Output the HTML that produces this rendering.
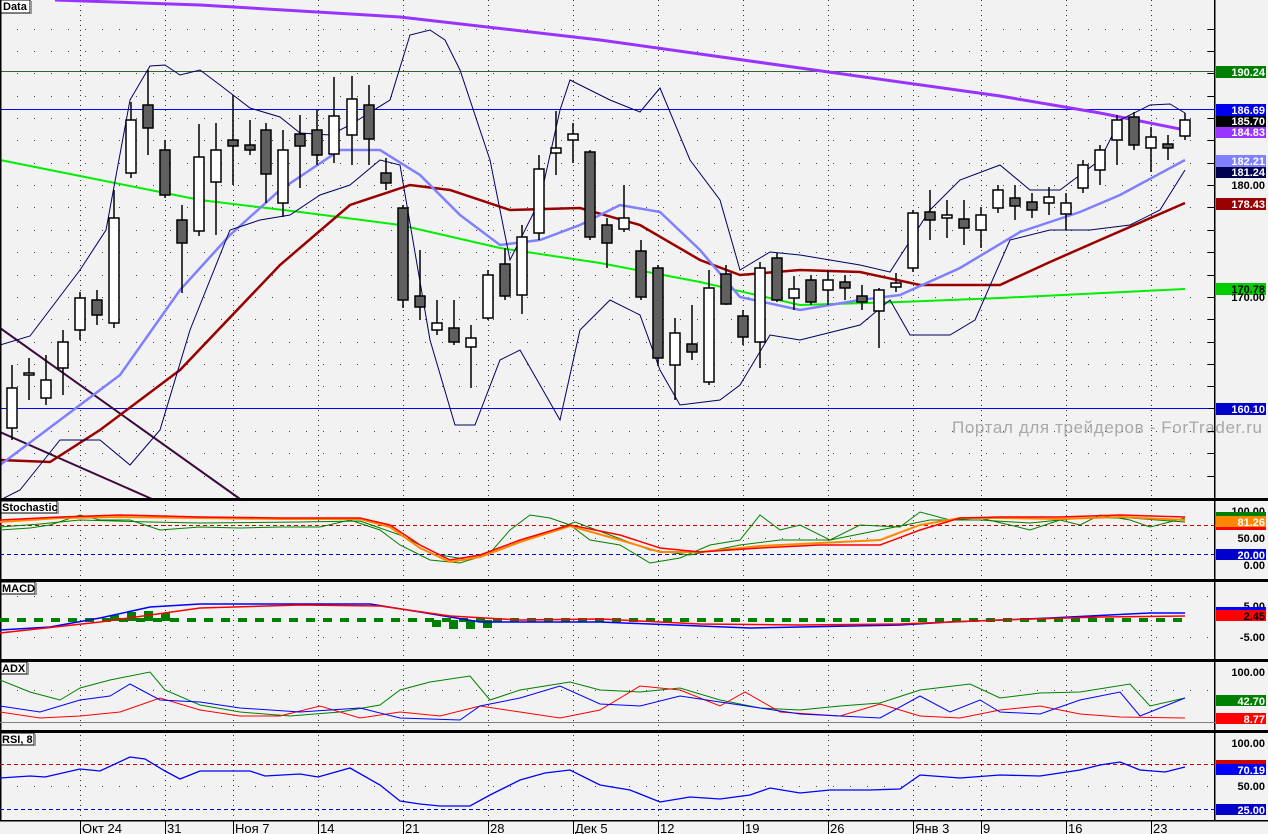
<!DOCTYPE html>
<html><head><meta charset="utf-8"><style>
html,body{margin:0;padding:0;background:#f2f2f2;}
svg{display:block;font-family:"Liberation Sans",sans-serif;}
.lb{font-weight:bold;font-size:11px;}
</style></head><body>
<svg width="1268" height="834" viewBox="0 0 1268 834" xmlns="http://www.w3.org/2000/svg">
<rect width="1268" height="834" fill="#f2f2f2"/>
<g stroke="#000" stroke-width="1" stroke-dasharray="1 4" opacity="0.8">
<path d="M80.5 0V820M165.5 0V820M233.5 0V820M318.5 0V820M403.5 0V820M488.5 0V820M573.5 0V820M658.5 0V820M743.5 0V820M828.5 0V820M913.5 0V820M981.5 0V820M1066.5 0V820M1151.5 0V820"/>
</g>
<g stroke="#000" stroke-width="1" stroke-dasharray="1 16" opacity="0.7">
<path d="M0 29.5H1215M0 51.5H1215M0 73.5H1215M0 96.5H1215M0 118.5H1215M0 140.5H1215M0 163.5H1215M0 185.5H1215M0 207.5H1215M0 230.5H1215M0 252.5H1215M0 275.5H1215M0 297.5H1215M0 319.5H1215M0 342.5H1215M0 364.5H1215M0 386.5H1215M0 431.5H1215M0 453.5H1215M0 476.5H1215"/>
<path d="M0 538.5H1215M0 596.5H1215M0 637.5H1215M0 690.5H1215M0 786.5H1215"/>
</g>
<path d="M0 71.5H1215" stroke="#336633" stroke-width="1"/>
<path d="M0 109.5H1215" stroke="#0000ff" stroke-width="1"/>
<path d="M0 408.5H1215" stroke="#0000ff" stroke-width="1"/>
<path d="M0 328L240 499M0 432L152 499" stroke="#3c0a3c" stroke-width="2" fill="none"/>
<polyline fill="none" stroke="#9933ff" stroke-width="3" points="55,0 200,5 400,17 600,40 800,68 1000,96 1100,113 1185,130"/>
<polyline fill="none" stroke="#00ee00" stroke-width="2" points="0,160 100,180 200,200 300,212 400,225 500,248 600,263 700,282 800,305 900,302 1000,298 1185,289"/>
<polyline fill="none" stroke="#990000" stroke-width="2.5" points="0,460 50,462 100,430 180,370 280,265 350,205 410,185 450,190 510,210 580,208 640,225 700,260 740,275 800,270 860,272 920,285 1000,285 1050,262 1100,240 1185,203"/>
<polyline fill="none" stroke="#8080ff" stroke-width="2.5" points="0,465 60,420 120,375 180,290 230,235 280,190 340,150 380,150 420,175 460,215 500,245 540,240 580,225 620,205 660,212 700,250 740,297 800,310 860,300 900,295 960,268 1020,232 1080,212 1120,195 1185,160"/>
<polyline fill="none" stroke="#000060" stroke-width="1" points="0,345 30,336 80,270 106,230 130,100 150,66 165,65 180,75 200,70 220,85 250,108 280,117 300,133 330,135 350,125 390,100 410,35 430,30 445,40 460,70 490,160 510,260 540,200 560,110 570,80 610,100 640,112 660,88 690,160 720,200 740,270 770,252 800,255 860,265 890,272 930,210 960,180 1000,165 1030,190 1060,190 1100,160 1120,120 1150,105 1170,104 1185,113"/>
<polyline fill="none" stroke="#000060" stroke-width="1" points="0,500 20,490 40,465 60,440 100,440 130,465 160,430 190,330 230,230 260,220 290,215 320,195 350,185 380,160 400,165 430,340 455,425 475,425 500,360 520,350 560,420 580,330 610,300 640,315 660,370 680,405 720,400 740,385 770,335 800,340 860,325 890,300 910,335 950,335 975,320 1010,240 1050,230 1090,230 1130,225 1160,210 1185,170"/>
<g stroke="#000" stroke-width="1.5">
<path d="M12 365V440M29 358V400M46 355V405M63 330V395M80 292V340M97 290V325M114 190V328M131 102V178M148 70V155M165 140V198M182 205V293M199 124V236M216 123V235M233 95V185M250 120V155M266 123V203M283 130V217M300 115V188M317 110V165M334 77V163M352 76V165M369 85V165M386 158V190M403 205V308M420 250V320M437 300V335M454 300V345M471 325V388M488 270V320M505 248V300M522 225V314M539 155V240M556 111V175M573 123V163M590 150V240M607 218V268M624 185V232M641 240V300M658 265V366M675 318V400M692 305V360M709 270V385M726 265V305M743 310V345M760 262V368M777 253V302M794 276V310M811 275V305M828 270V305M845 275V300M862 285V310M879 288V348M896 273V292M913 210V272M930 190V240M947 200V238M964 200V245M981 207V248M998 185V213M1015 185V220M1032 193V218M1049 187V215M1066 193V230M1083 160V193M1100 145V185M1117 115V165M1134 112V150M1151 127V172M1168 135V160M1185 113V140"/>
<g fill="#fff">
<rect x="7" y="388" width="10" height="40"/><rect x="24" y="373" width="10" height="2"/><rect x="41" y="380" width="10" height="18"/><rect x="58" y="342" width="10" height="26"/><rect x="75" y="298" width="10" height="32"/><rect x="109" y="218" width="10" height="105"/><rect x="126" y="120" width="10" height="53"/><rect x="194" y="157" width="10" height="74"/><rect x="211" y="150" width="10" height="32"/><rect x="278" y="150" width="10" height="53"/><rect x="329" y="116" width="10" height="38"/><rect x="347" y="99" width="10" height="36"/><rect x="432" y="323" width="10" height="7"/><rect x="466" y="338" width="10" height="9"/><rect x="483" y="275" width="10" height="43"/><rect x="517" y="237" width="10" height="58"/><rect x="534" y="169" width="10" height="64"/><rect x="551" y="148" width="10" height="5"/><rect x="568" y="134" width="10" height="6"/><rect x="619" y="218" width="10" height="11"/><rect x="670" y="333" width="10" height="32"/><rect x="704" y="288" width="10" height="94"/><rect x="755" y="268" width="10" height="74"/><rect x="789" y="289" width="10" height="9"/><rect x="823" y="280" width="10" height="10"/><rect x="874" y="290" width="10" height="21"/><rect x="891" y="283" width="10" height="4"/><rect x="908" y="213" width="10" height="55"/><rect x="942" y="215" width="10" height="3"/><rect x="976" y="215" width="10" height="15"/><rect x="993" y="190" width="10" height="18"/><rect x="1044" y="197" width="10" height="6"/><rect x="1061" y="203" width="10" height="11"/><rect x="1078" y="165" width="10" height="23"/><rect x="1095" y="150" width="10" height="20"/><rect x="1112" y="120" width="10" height="20"/><rect x="1146" y="137" width="10" height="11"/><rect x="1180" y="120" width="10" height="16"/>
</g>
<g fill="#606060">
<rect x="92" y="300" width="10" height="15"/><rect x="143" y="105" width="10" height="23"/><rect x="160" y="150" width="10" height="45"/><rect x="177" y="220" width="10" height="23"/><rect x="228" y="140" width="10" height="6"/><rect x="245" y="145" width="10" height="5"/><rect x="261" y="130" width="10" height="44"/><rect x="295" y="134" width="10" height="12"/><rect x="312" y="130" width="10" height="25"/><rect x="364" y="105" width="10" height="34"/><rect x="381" y="173" width="10" height="10"/><rect x="398" y="208" width="10" height="92"/><rect x="415" y="296" width="10" height="11"/><rect x="449" y="328" width="10" height="14"/><rect x="500" y="264" width="10" height="32"/><rect x="585" y="152" width="10" height="85"/><rect x="602" y="225" width="10" height="18"/><rect x="636" y="251" width="10" height="46"/><rect x="653" y="268" width="10" height="90"/><rect x="687" y="344" width="10" height="8"/><rect x="721" y="274" width="10" height="30"/><rect x="738" y="316" width="10" height="21"/><rect x="772" y="258" width="10" height="42"/><rect x="806" y="280" width="10" height="22"/><rect x="840" y="282" width="10" height="6"/><rect x="857" y="296" width="10" height="6"/><rect x="925" y="212" width="10" height="8"/><rect x="959" y="219" width="10" height="9"/><rect x="1010" y="198" width="10" height="8"/><rect x="1027" y="202" width="10" height="8"/><rect x="1129" y="117" width="10" height="28"/><rect x="1163" y="144" width="10" height="4"/>
</g>
</g>
<text x="952" y="433" font-size="17" fill="#a8a8a8" textLength="310" lengthAdjust="spacing">Портал для трейдеров - ForTrader.ru</text>
<g fill="#000">
<rect x="0" y="498" width="1268" height="3"/><rect x="0" y="579" width="1268" height="3"/><rect x="0" y="659" width="1268" height="3"/><rect x="0" y="730" width="1268" height="3"/>
<rect x="0" y="820" width="1268" height="1.5"/>
<rect x="1214" y="0" width="1.5" height="821"/>
<rect x="0" y="0" width="1.5" height="821"/>
</g>
<path d="M0 525.5H1215" stroke="#cc0000" stroke-dasharray="4 3"/>
<path d="M0 554.5H1215" stroke="#0000cc" stroke-dasharray="4 3"/>
<polyline fill="none" stroke="#008000" points="0,530 30,528 50,525 80,515 100,520 130,520 160,530 200,527 240,528 280,527 320,527 350,520 380,530 400,545 430,560 460,563 490,553 510,530 530,515 550,518 570,525 590,540 620,545 650,563 680,558 710,545 740,540 760,515 780,530 800,525 830,540 860,525 900,527 920,512 950,520 980,518 1010,525 1030,530 1060,520 1080,525 1100,515 1130,520 1150,527 1185,518"/>
<polyline fill="none" stroke="#008000" points="0,527 40,524 80,520 150,522 200,523 300,522 360,521 400,535 440,555 470,560 500,550 540,535 575,522 610,535 650,550 690,555 740,545 780,540 830,540 880,530 930,520 980,520 1030,523 1080,518 1130,518 1185,522"/>
<polyline fill="none" stroke="#ff8800" stroke-width="2" points="0,522 60,518 120,517 200,518 280,519 360,519 390,527 420,548 450,562 480,557 520,542 570,526 620,540 660,552 700,552 760,546 820,543 880,540 920,525 960,518 1000,518 1060,519 1120,517 1185,520"/>
<polyline fill="none" stroke="#ff0000" stroke-width="1.5" points="0,520 60,517 120,515 200,517 280,518 360,518 390,525 420,545 450,560 480,555 520,540 570,525 620,535 660,548 700,552 760,548 820,545 880,545 920,530 960,518 1000,517 1060,517 1120,515 1185,517"/>
<path d="M0 620H1185" stroke="#008000" stroke-width="4" stroke-dasharray="9 8"/>
<g fill="#008000"><rect x="110" y="615" width="9" height="6"/><rect x="127" y="612" width="9" height="9"/><rect x="144" y="611" width="9" height="10"/><rect x="161" y="613" width="9" height="8"/><rect x="432" y="620" width="9" height="7"/><rect x="449" y="620" width="9" height="9"/><rect x="466" y="620" width="9" height="9"/><rect x="483" y="620" width="9" height="8"/></g>
<polyline fill="none" stroke="#0000ff" stroke-width="1.5" points="0,630 50,627 100,618 150,607 200,604 300,604 370,604 420,612 480,622 540,622 600,622 650,624 700,626 750,628 800,627 900,625 950,622 1050,618 1150,613 1185,613"/>
<polyline fill="none" stroke="#ff0000" stroke-width="1.5" points="0,633 100,622 200,608 300,605 380,606 450,616 520,620 600,619 700,624 800,625 900,624 1000,620 1100,617 1185,616"/>
<path d="M0 722.5H1215" stroke="#808080"/>
<polyline fill="none" stroke="#008000" points="0,680 30,692 60,700 80,688 110,680 150,672 165,690 200,705 240,712 290,716 340,712 380,705 400,690 430,682 470,676 490,700 520,690 570,682 600,690 640,692 680,688 720,700 760,708 800,710 840,706 880,703 920,690 970,684 1000,698 1040,693 1080,692 1130,684 1150,706 1185,698"/>
<polyline fill="none" stroke="#ff0000" points="0,712 40,718 80,716 120,712 160,698 200,710 240,716 280,716 320,706 360,718 400,712 440,716 480,706 520,712 560,718 600,710 640,686 680,690 720,706 745,692 780,712 840,716 880,704 920,716 960,718 1000,710 1040,706 1080,714 1120,717 1185,718"/>
<polyline fill="none" stroke="#0000ff" points="0,706 40,712 80,700 110,696 130,684 160,700 200,702 240,708 300,712 360,708 400,718 460,720 480,706 520,698 560,686 600,704 640,706 680,696 720,702 760,708 800,714 840,716 880,718 920,696 950,712 980,700 1000,712 1040,714 1080,700 1120,692 1140,716 1160,708 1185,698"/>
<path d="M0 764.5H1215" stroke="#cc0000" stroke-dasharray="4 3"/>
<path d="M0 809.5H1215" stroke="#0000cc" stroke-dasharray="4 3"/>
<polyline fill="none" stroke="#0000ff" stroke-width="1.3" points="0,778 30,776 45,777 80,769 100,771 130,757 145,759 165,771 180,779 200,771 250,771 265,776 300,774 318,777 350,768 380,785 400,801 420,804 440,806 470,806 490,795 520,780 545,773 570,770 600,785 630,790 660,802 690,797 720,799 750,795 770,788 800,793 830,790 870,790 900,789 920,775 960,778 1000,775 1040,776 1060,773 1080,770 1100,765 1120,762 1140,770 1165,772 1185,767"/>
<g>
<rect x="1" y="0" width="29" height="13" fill="#fff" stroke="#000" stroke-width="1"/><rect x="30" y="1" width="2" height="13" fill="#999"/>
<text x="3" y="10" class="lb" fill="#000">Data</text>
<rect x="1" y="501" width="56" height="12" fill="#fff" stroke="#000"/><rect x="57" y="502" width="2" height="12" fill="#999"/>
<text x="2" y="511" class="lb">Stochastic</text>
<rect x="1" y="582" width="34" height="12" fill="#fff" stroke="#000"/><rect x="35" y="583" width="2" height="12" fill="#999"/>
<text x="2" y="592" class="lb">MACD</text>
<rect x="1" y="662" width="26" height="12" fill="#fff" stroke="#000"/><rect x="27" y="663" width="2" height="12" fill="#999"/>
<text x="2" y="672" class="lb">ADX</text>
<rect x="1" y="733" width="33" height="12" fill="#fff" stroke="#000"/><rect x="34" y="734" width="2" height="12" fill="#999"/>
<text x="2" y="743" class="lb">RSI, 8</text>
</g>
<g stroke="#000"><path d="M1208 29.5H1214M1208 51.5H1214M1208 73.5H1214M1208 96.5H1214M1208 118.5H1214M1208 140.5H1214M1208 163.5H1214M1208 185.5H1214M1208 207.5H1214M1208 230.5H1214M1208 252.5H1214M1208 275.5H1214M1208 297.5H1214M1208 319.5H1214M1208 342.5H1214M1208 364.5H1214M1208 386.5H1214M1208 408.5H1214M1208 431.5H1214M1208 453.5H1214M1208 476.5H1214"/></g>
<g class="lb" text-anchor="end">
<rect x="1216" y="66" width="50" height="12" fill="#008000"/><text x="1265" y="76" fill="#fff">190.24</text>
<rect x="1216" y="104" width="50" height="12" fill="#0000ee"/><text x="1265" y="114" fill="#fff">186.69</text>
<rect x="1216" y="116" width="50" height="11" fill="#000"/><text x="1265" y="125" fill="#fff">185.70</text>
<rect x="1216" y="127" width="50" height="11" fill="#9933ff"/><text x="1265" y="136" fill="#fff">184.83</text>
<rect x="1216" y="155" width="50" height="12" fill="#8080ff"/><text x="1265" y="165" fill="#fff">182.21</text>
<rect x="1216" y="167" width="50" height="11" fill="#000050"/><text x="1265" y="176" fill="#fff">181.24</text>
<text x="1265" y="189" fill="#000">180.00</text>
<rect x="1216" y="198" width="50" height="12" fill="#990000"/><text x="1265" y="208" fill="#fff">178.43</text>
<rect x="1216" y="283" width="50" height="12" fill="#00cc00"/><text x="1265" y="293" fill="#000">170.78</text>
<text x="1265" y="301" fill="#000">170.00</text>
<rect x="1216" y="403" width="50" height="12" fill="#0000cc"/><text x="1265" y="413" fill="#fff">160.10</text>
<text x="1265" y="515" fill="#000">100.00</text>
<rect x="1216" y="512" width="50" height="4" fill="#008000"/>
<rect x="1216" y="516" width="50" height="11" fill="#ff8800"/><text x="1265" y="526" fill="#fff">81.26</text>
<rect x="1216" y="527" width="50" height="3" fill="#ff0000"/>
<text x="1265" y="542" fill="#000">50.00</text>
<rect x="1216" y="549" width="50" height="11" fill="#0000cc"/><text x="1265" y="559" fill="#fff">20.00</text>
<text x="1265" y="569" fill="#000">0.00</text>
<text x="1265" y="610" fill="#000">5.00</text>
<rect x="1216" y="607" width="50" height="3" fill="#0000ff"/>
<rect x="1216" y="610" width="50" height="11" fill="#ff0000"/><text x="1265" y="620" fill="#000">2.45</text>
<text x="1265" y="641" fill="#000">-5.00</text>
<text x="1265" y="676" fill="#000">100.00</text>
<rect x="1216" y="695" width="50" height="11" fill="#008000"/><text x="1265" y="705" fill="#fff">42.70</text>
<rect x="1216" y="713" width="50" height="11" fill="#ff0000"/><text x="1265" y="723" fill="#fff">8.77</text>
<text x="1265" y="747" fill="#000">100.00</text>
<rect x="1216" y="760" width="50" height="4" fill="#cc0000"/>
<rect x="1216" y="764" width="50" height="11" fill="#0000ff"/><text x="1265" y="774" fill="#fff">70.19</text>
<text x="1265" y="790" fill="#000">50.00</text>
<rect x="1216" y="804" width="50" height="11" fill="#0000cc"/><text x="1265" y="814" fill="#fff">25.00</text>
</g>
<g stroke="#000"><path d="M80.5 821V834M165.5 821V834M233.5 821V834M318.5 821V834M403.5 821V834M488.5 821V834M573.5 821V834M658.5 821V834M743.5 821V834M828.5 821V834M913.5 821V834M981.5 821V834M1066.5 821V834M1151.5 821V834"/></g>
<g font-size="13" fill="#000">
<text x="82" y="833">Окт 24</text><text x="167" y="833">31</text><text x="235" y="833">Ноя 7</text><text x="320" y="833">14</text><text x="405" y="833">21</text><text x="490" y="833">28</text><text x="575" y="833">Дек 5</text><text x="660" y="833">12</text><text x="745" y="833">19</text><text x="830" y="833">26</text><text x="915" y="833">Янв 3</text><text x="983" y="833">9</text><text x="1068" y="833">16</text><text x="1153" y="833">23</text>
</g>
</svg>
</body></html>
